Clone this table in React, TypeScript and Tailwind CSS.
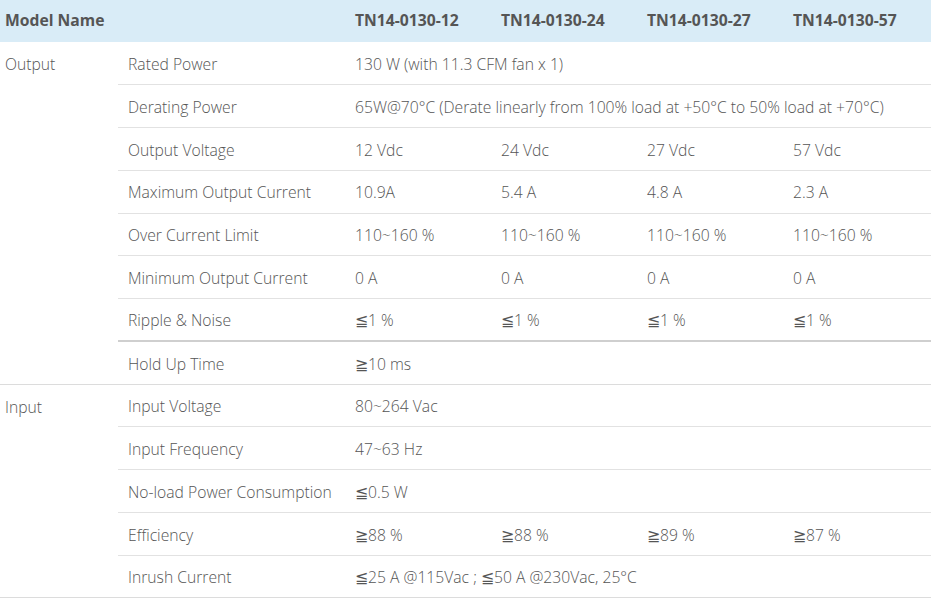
const models = ['TN14-0130-12', 'TN14-0130-24', 'TN14-0130-27', 'TN14-0130-57']

type Row = { label: string; values: string[]; thick?: boolean }

const output: Row[] = [
  { label: 'Rated Power', values: ['130 W (with 11.3 CFM fan x 1)'] },
  { label: 'Derating Power', values: ['65W@70°C (Derate linearly from 100% load at +50°C to 50% load at +70°C)'] },
  { label: 'Output Voltage', values: ['12 Vdc', '24 Vdc', '27 Vdc', '57 Vdc'] },
  { label: 'Maximum Output Current', values: ['10.9A', '5.4 A', '4.8 A', '2.3 A'] },
  { label: 'Over Current Limit', values: ['110~160 %', '110~160 %', '110~160 %', '110~160 %'] },
  { label: 'Minimum Output Current', values: ['0 A', '0 A', '0 A', '0 A'] },
  { label: 'Ripple & Noise', values: ['≦1 %', '≦1 %', '≦1 %', '≦1 %'] },
  { label: 'Hold Up Time', values: ['≧10 ms'], thick: true },
]

const input: Row[] = [
  { label: 'Input Voltage', values: ['80~264 Vac'] },
  { label: 'Input Frequency', values: ['47~63 Hz'] },
  { label: 'No-load Power Consumption', values: ['≦0.5 W'] },
  { label: 'Efficiency', values: ['≧88 %', '≧88 %', '≧89 %', '≧87 %'] },
  { label: 'Inrush Current', values: ['≦25 A @115Vac ; ≦50 A @230Vac, 25°C'] },
]

function Group({ name, rows }: { name: string; rows: Row[] }) {
  return (
    <>
      {rows.map((r, i) => {
        const last = i === rows.length - 1
        const cls = `pl-[10px] pt-[3px] whitespace-nowrap ${r.thick ? 'border-t-2 border-t-[#cfcfcf]' : ''} border-b ${
          last ? 'border-[#dcdcdc]' : 'border-[#e2e2e2]'
        }`
        return (
          <tr key={r.label} className="h-[42.77px]">
            {i === 0 && (
              <td rowSpan={rows.length} className="align-top pl-[5px] pt-[11px] border-b border-[#dcdcdc]">
                {name}
              </td>
            )}
            <td className={cls}>{r.label}</td>
            {r.values.length === 1 ? (
              <td colSpan={4} className={cls}>
                {r.values[0]}
              </td>
            ) : (
              r.values.map((v, j) => (
                <td key={j} className={cls}>
                  {v}
                </td>
              ))
            )}
          </tr>
        )
      })}
    </>
  )
}

export default function App() {
  return (
    <div className="w-[931px] h-[600px] bg-white overflow-hidden font-['Open_Sans',sans-serif] text-[15.7px] font-light text-[#555]">
      <table className="w-[931px] table-fixed border-collapse">
        <colgroup>
          <col className="w-[118px]" />
          <col className="w-[227px]" />
          <col className="w-[146px]" />
          <col className="w-[146px]" />
          <col className="w-[146px]" />
          <col className="w-[148px]" />
        </colgroup>
        <thead>
          <tr className="h-[42px] bg-[#d9ecf7] text-left">
            <th colSpan={2} className="pl-[5px] font-bold">Model Name</th>
            {models.map(m => (
              <th key={m} className="pl-[10px] font-bold">{m}</th>
            ))}
          </tr>
        </thead>
        <tbody>
          <Group name="Output" rows={output} />
          <Group name="Input" rows={input} />
        </tbody>
      </table>
    </div>
  )
}
